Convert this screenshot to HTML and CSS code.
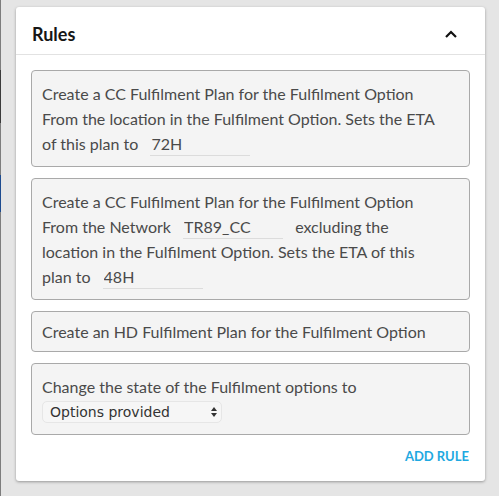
FILE: index.html
```html
<!DOCTYPE html>
<html lang="en">
<head>
<meta charset="utf-8">
<title>Rules</title>
<link rel="stylesheet" href="styles.css">
</head>
<body>
<div class="layout">
  <aside class="rail">
    <span class="rail__seg rail__seg--grey rail__seg--a"></span>
    <span class="rail__seg rail__seg--dark"></span>
    <span class="rail__seg rail__seg--grey rail__seg--b"></span>
    <span class="rail__seg rail__seg--blue"></span>
    <span class="rail__seg rail__seg--grey rail__seg--rest"></span>
  </aside>
  <main class="main">
    <section class="card">
      <header class="card__header">
        <h2 class="card__title">Rules</h2>
        <button class="card__toggle" type="button" aria-label="Collapse">
          <svg width="12" height="8" viewBox="0 0 12 8"><polyline points="1,7 6,2 11,7" fill="none" stroke="#111" stroke-width="2.2"/></svg>
        </button>
      </header>
      <div class="card__body">
        <div class="rule">Create a CC Fulfilment Plan for the Fulfilment Option From the location in the Fulfilment Option. Sets the ETA of this plan to <input class="rule__input" type="text" value="72H"></div>
        <div class="rule">Create a CC Fulfilment Plan for the Fulfilment Option From the Network <input class="rule__input" type="text" value="TR89_CC"> excluding the location in the Fulfilment Option. Sets the ETA of this plan to <input class="rule__input" type="text" value="48H"></div>
        <div class="rule rule--single">Create an HD Fulfilment Plan for the Fulfilment Option</div>
        <div class="rule">Change the state of the Fulfilment options to <span class="select"><select class="select__field"><option>Options provided</option></select><svg class="select__arrows" width="6" height="12" viewBox="0 0 6 12"><polygon points="0,5 3,1 6,5" fill="#333"/><polygon points="0,7 3,11 6,7" fill="#333"/></svg></span></div>
      </div>
      <footer class="card__footer">
        <button class="add-rule" type="button">ADD RULE</button>
      </footer>
    </section>
  </main>
</div>
</body>
</html>
```
FILE: styles.css
```css
* { box-sizing: border-box; }

html, body {
  margin: 0;
  padding: 0;
  background: #e5e5e5;
  font-family: Lato, "Open Sans", sans-serif;
}

.layout {
  display: flex;
  min-height: 496px;
}

.rail {
  width: 1px;
  display: flex;
  flex-direction: column;
  flex-shrink: 0;
}

.rail__seg { display: block; }
.rail__seg--grey { background: #7d7d7d; }
.rail__seg--a { height: 70px; }
.rail__seg--dark { height: 53px; background: #3a3a3a; }
.rail__seg--b { height: 52px; }
.rail__seg--blue { height: 37px; background: #1d4b8f; }
.rail__seg--rest { flex: 1; }

.main {
  padding: 7px 0 0 15px;
}

.card {
  width: 469px;
  background: #fff;
  border-radius: 3px;
  box-shadow: 0 1px 3px rgba(0, 0, 0, 0.35);
}

.card__header {
  height: 48px;
  padding: 6px 28px 0 16px;
  display: flex;
  align-items: center;
  justify-content: space-between;
  border-bottom: 1px solid #e2e2e2;
}

.card__title {
  margin: 0;
  font-size: 18px;
  line-height: 22px;
  font-weight: 700;
  color: #161616;
}

.card__toggle {
  display: flex;
  padding: 0;
  border: 0;
  background: none;
}

.card__body {
  padding: 15px 15px 0;
  display: flex;
  flex-direction: column;
  gap: 11px;
}

.rule {
  background: #f4f4f4;
  border: 1px solid #a9a9a9;
  border-radius: 4px;
  padding: 10px 32px 10px 10px;
  font-size: 16px;
  line-height: 25px;
  color: #4a4a4a;
}

.rule--single {
  padding-top: 7px;
  padding-bottom: 7px;
}

.rule__input {
  display: inline-block;
  vertical-align: top;
  width: 100px;
  height: 25px;
  margin: 0 8px;
  padding: 0 1px;
  border: 0;
  border-bottom: 1px solid #dcdcdc;
  background: transparent;
  font-family: inherit;
  font-size: 16px;
  color: #4a4a4a;
  outline: none;
}

.select {
  position: relative;
  display: inline-block;
  vertical-align: top;
  height: 25px;
  padding-top: 2px;
}

.select__field {
  -webkit-appearance: none;
  appearance: none;
  display: block;
  width: 180px;
  height: 22px;
  padding: 0 20px 0 7px;
  border: 1px solid #e6e6e6;
  border-radius: 5px;
  background: #f6f6f6;
  font-family: "DejaVu Sans", sans-serif;
  font-size: 14px;
  color: #333;
}

.select__arrows {
  position: absolute;
  right: 5px;
  top: 7px;
  pointer-events: none;
}

.card__footer {
  display: flex;
  justify-content: flex-end;
  padding: 12px 16px 16px;
}

.add-rule {
  padding: 0;
  border: 0;
  background: none;
  font-family: Lato, sans-serif;
  font-size: 13px;
  line-height: 18px;
  font-weight: 700;
  color: #1fa9e1;
  cursor: pointer;
}
```
